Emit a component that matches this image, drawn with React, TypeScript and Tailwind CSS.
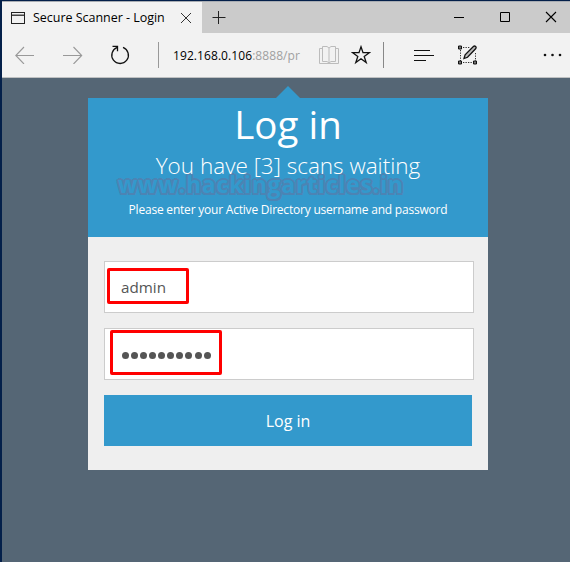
import React from "react";

function WindowIcon() {
  return (
    <svg width="14" height="12" viewBox="0 0 14 12" shapeRendering="crispEdges" className="shrink-0">
      <path d="M.5 .5h13v11H.5z" fill="none" stroke="#222" />
      <path d="M1 2.5h12" stroke="#999" />
      <path d="M1 3.5h12" stroke="#444" />
    </svg>
  );
}

function TitleBar() {
  return (
    <div className="flex h-[32px] border-t border-[#a9adb3] bg-[#cbcbcb]">
      <div className="flex w-[200px] items-center bg-[#f2f2f2] pl-[9px]">
        <WindowIcon />
        <span className="ml-[8px] w-[132px] whitespace-nowrap text-[12.5px] leading-4 tracking-[-0.03px] text-black">
          Secure Scanner - Login
        </span>
        <svg width="12" height="12" viewBox="0 0 12 12" className="ml-[15px]" fill="none" stroke="#333">
          <path d="M1 1l10 10M11 1L1 11" />
        </svg>
      </div>
      <svg width="14" height="14" viewBox="0 0 14 14" className="ml-[10px] mt-[8px]" fill="none" stroke="#222">
        <path d="M.5 7.5h13M6.5 1v13" />
      </svg>
      <div className="ml-auto flex pt-[9px]">
        <svg width="10" height="12" viewBox="0 0 10 12" stroke="#000">
          <path d="M0 6.5h10" />
        </svg>
        <svg width="10" height="12" viewBox="0 0 10 12" className="ml-[36px]" fill="none" stroke="#000">
          <path d="M.5 1.5h9v9h-9z" />
        </svg>
        <svg width="12" height="12" viewBox="0 0 12 12" className="ml-[35px] mr-[13px]" fill="none" stroke="#000" strokeWidth="1.1">
          <path d="M1 1l10 10M11 1L1 11" />
        </svg>
      </div>
    </div>
  );
}

function ToolBar() {
  return (
    <div className="flex h-[45px] items-center border-b border-[#bfc1c2] bg-[#f2f2f2] pl-[13px]">
      <svg width="20" height="18" viewBox="0 0 20 18" fill="none" stroke="#999" strokeWidth="1.1">
        <path d="M19 9.5H1M9 1L.8 9.5 9 18" />
      </svg>
      <svg width="20" height="18" viewBox="0 0 20 18" className="ml-[28px]" fill="none" stroke="#999" strokeWidth="1.1">
        <path d="M0 9.5h18.5M10.5 1l8.2 8.5-8.2 8.5" />
      </svg>
      <svg width="20" height="20" viewBox="0 0 20 20" className="ml-[27px]" fill="none" stroke="#111" strokeWidth="1.3">
        <path d="M7.2 2.4A8.3 8.3 0 1 0 13 2.4M2.5 1.3h5v5" />
      </svg>
      <div className="ml-[28px] h-[26px] w-px bg-[#999]" />
      <div className="ml-[14px] w-[128px] overflow-hidden whitespace-nowrap pt-px text-[12px] leading-4 tracking-[0.08px] text-black">
        192.168.0.106<span className="text-[#a0a0a0]">:8888/pr</span>
      </div>
      <svg width="20" height="19" viewBox="0 0 20 19" className="ml-[18px]" fill="none" stroke="#bcbcbc">
        <path d="M3.5.5H8l2 1.5 2-1.5h4.5v15H12L10 17l-2-1.5H3.5zM10 2v15M3 2.5H.5v15h19v-15H17" />
      </svg>
      <svg width="20" height="20" viewBox="0 0 20 20" className="ml-[12px]" fill="none" stroke="#111" strokeWidth="1.3">
        <path d="M10 1.8l2 5.9h6.3l-5.1 3.7 2 6.1L10 13.8l-5.2 3.7 2-6.1-5.1-3.7H8z" />
      </svg>
      <div className="ml-[12px] h-[26px] w-px bg-[#888]" />
      <svg width="20" height="13" viewBox="0 0 20 13" className="ml-[30px]" stroke="#111" strokeWidth="1.1">
        <path d="M0 1.5h16M0 6.5h20M0 11.5h12" />
      </svg>
      <svg width="20" height="20" viewBox="0 0 20 20" className="ml-[24px]" fill="none">
        <path d="M5 2.5h7M5 17.5h11M2.5 5v11M17.5 8v8" stroke="#333" strokeDasharray="1.3 1.2" />
        <path d="M.5 1h3v3h-3zM.5 16h3v3h-3zM15.500 16h3v3h-3z" fill="#777" stroke="#111" />
        <path d="M6 13.500l1.100-3.700 8.300-8.300q1.100-1 2.200 0t0 2.200L9.500 12.300z" fill="#bbb" stroke="#111" strokeWidth="1.300" />
      </svg>
      <svg width="20" height="4" viewBox="0 0 20 4" className="ml-[65px]" fill="#111">
        <circle cx="2" cy="2" r="1.3" />
        <circle cx="9.500" cy="2" r="1.3" />
        <circle cx="17" cy="2" r="1.3" />
      </svg>
    </div>
  );
}

function CardHeader() {
  return (
    <div className="relative h-[139px] bg-[#3399cc] text-center text-white">
      <svg width="24" height="12" viewBox="0 0 24 12" className="absolute -top-[12px] left-[188px]">
        <path d="M0 12L12 0l12 12z" fill="#3399cc" />
      </svg>
      <div className="absolute left-[30px] top-[75px] whitespace-nowrap text-[22.5px] font-bold leading-6 tracking-[1px] text-[#3399cc] [text-shadow:2px_0_#4c84b4,-2px_0_#4c84b4,0_2px_#4c84b4,0_-2px_#4c84b4,1.5px_1.5px_#4c84b4,-1.5px_1.5px_#4c84b4,1.5px_-1.5px_#4c84b4,-1.5px_-1.5px_#4c84b4]">
        www.hackingarticles.in
      </div>
      <h1 className="relative pt-[6px] text-[38.5px] leading-[40px]">Log in</h1>
      <h2 className="relative mt-[6px] whitespace-nowrap text-[22.5px] font-light leading-8">You have [3] scans waiting</h2>
      <p className="relative mt-[20px] whitespace-nowrap text-[12px] leading-4 tracking-[-0.21px]">
        Please enter your Active Directory username and password
      </p>
    </div>
  );
}

function LoginForm() {
  return (
    <div className="flex h-[233px] flex-col bg-[#efefef] px-4 pt-6">
      <div className="h-[52px] w-[370px] border border-[#ccc] bg-white pl-[2px] pt-[6px]">
        <div className="flex h-[36px] w-[82px] items-center rounded-[2px] border-3 border-[#ff0000] pl-[11px] pt-[2px] text-[15.2px] leading-5 text-[#555]">
          admin
        </div>
      </div>
      <div className="mt-[15px] h-[52px] w-[370px] border border-[#ccc] bg-white pl-[5px] pt-px">
        <div className="flex h-[45px] w-[112px] items-center gap-[2.15px] rounded-[2px] border-3 border-[#ff0000] pl-[8.500px] pt-[6px]">
          {Array.from({ length: 10 }, (_, i) => (
            <span key={i} className="size-[7px] shrink-0 rounded-full bg-[#555]" />
          ))}
        </div>
      </div>
      <button className="mt-[15px] h-[51px] w-[368px] bg-[#3399cc] text-[16px] leading-5 text-white">Log in</button>
    </div>
  );
}

export default function App() {
  return (
    <div className="h-[562px] w-[570px] overflow-hidden bg-[#556675] font-['Open_Sans','Noto_Sans',sans-serif]">
      <div className="h-full border-l-2 border-t border-[#04204a]">
        <TitleBar />
        <ToolBar />
        <div className="ml-[86px] mt-[20px] w-[400px]">
          <CardHeader />
          <LoginForm />
        </div>
      </div>
    </div>
  );
}
